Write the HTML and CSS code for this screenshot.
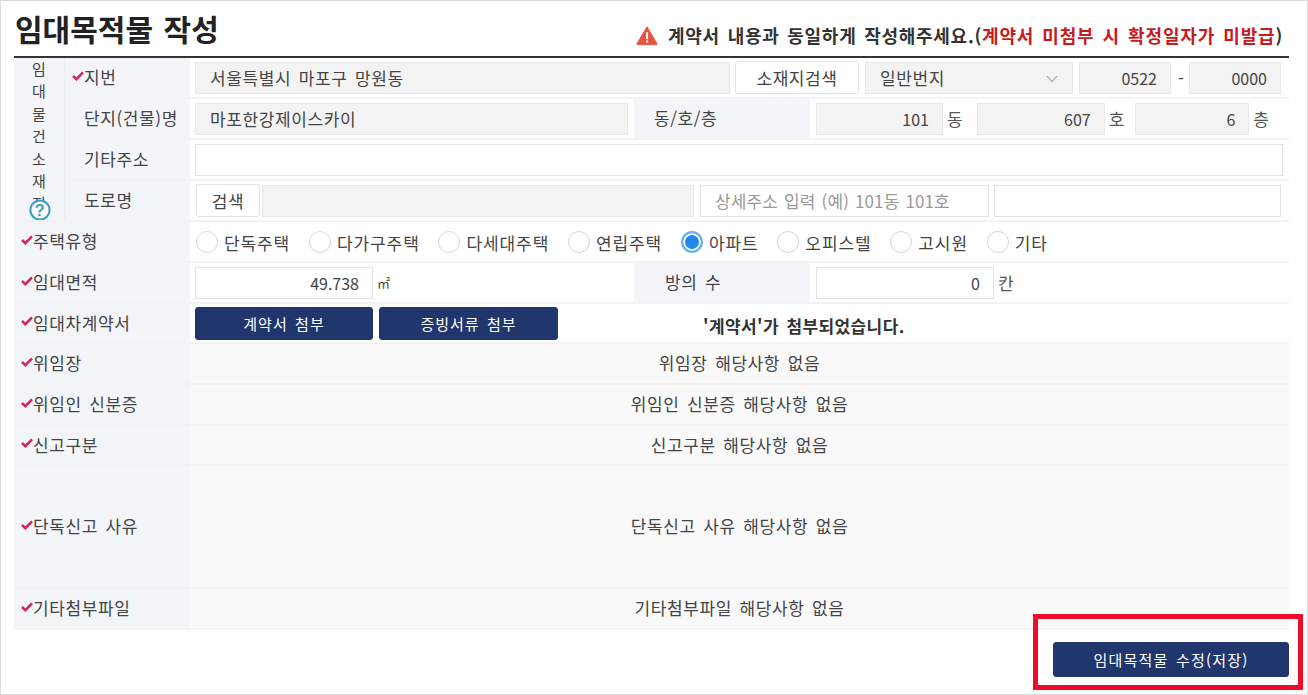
FILE: index.html
```html
<!DOCTYPE html>
<html lang="ko">
<head>
<meta charset="utf-8">
<title>임대목적물 작성</title>
<link rel="stylesheet" href="styles.css">
</head>
<body>
<svg class="defs" width="0" height="0"><defs>
<symbol id="chk" viewBox="0 0 12 10"><path d="M1 5 L4.4 8.2 L11 1.4" fill="none" stroke="#d3265f" stroke-width="2.6"/></symbol>
</defs></svg>
<main class="frame">
  <header class="head">
    <h1 class="title">임대목적물 작성</h1>
    <p class="notice">
      <svg class="warn" viewBox="0 0 24 22"><path d="M12 1.5 L23 20 Q23.4 21 22 21 L2 21 Q.6 21 1 20 Z" fill="#e8553f" stroke="#e8553f" stroke-linejoin="round"/><rect x="11" y="7.5" width="2.2" height="7.5" fill="#fff"/><rect x="11" y="16.5" width="2.2" height="2.2" fill="#fff"/></svg>
      <span>계약서 내용과 동일하게 작성해주세요.(<em class="red">계약서 미첨부 시 확정일자가 미발급</em>)</span>
    </p>
  </header>

  <section class="group">
    <div class="group-label"><span class="stack">임대물건소재지</span>
      <svg class="help" viewBox="0 0 22 22"><circle cx="11" cy="11" r="9.6" fill="#fff" stroke="#3d9cc6" stroke-width="2"/><text x="11" y="16.5" text-anchor="middle" class="help-mark">?</text></svg>
    </div>
    <div class="group-rows">
      <div class="row">
        <div class="label sub"><svg class="check"><use href="#chk"/></svg>지번</div>
        <div class="value">
          <div class="field ro w535">서울특별시 마포구 망원동</div>
          <button class="btn w124">소재지검색</button>
          <div class="field ro select w208">일반번지<svg class="chev" viewBox="0 0 12 8"><path d="M1 1 L6 6.5 L11 1" fill="none" stroke="#bbb" stroke-width="1.6"/></svg></div>
          <div class="field ro num w92">0522</div>
          <span class="dash">-</span>
          <div class="field ro num w92">0000</div>
        </div>
      </div>
      <div class="row">
        <div class="label sub plain">단지(건물)명</div>
        <div class="value">
          <div class="field ro w433">마포한강제이스카이</div>
          <div class="label inner">동/호/층</div>
          <div class="field ro num w127">101</div><span class="unit u34">동</span>
          <div class="field ro num w128">607</div><span class="unit u31">호</span>
          <div class="field ro num w114">6</div><span class="unit">층</span>
        </div>
      </div>
      <div class="row">
        <div class="label sub plain">기타주소</div>
        <div class="value"><div class="field grow"></div></div>
      </div>
      <div class="row">
        <div class="label sub plain">도로명</div>
        <div class="value road">
          <button class="btn w64">검색</button>
          <div class="field ro w432"></div>
          <div class="field ph w289">상세주소 입력 (예) 101동 101호</div>
          <div class="field w287"></div>
        </div>
      </div>
    </div>
  </section>

  <div class="row">
    <div class="label"><svg class="check"><use href="#chk"/></svg>주택유형</div>
    <div class="value radios">
      <label class="radio"><i class="dot"></i>단독주택</label>
      <label class="radio"><i class="dot"></i>다가구주택</label>
      <label class="radio"><i class="dot"></i>다세대주택</label>
      <label class="radio"><i class="dot"></i>연립주택</label>
      <label class="radio"><i class="dot on"></i>아파트</label>
      <label class="radio"><i class="dot"></i>오피스텔</label>
      <label class="radio"><i class="dot"></i>고시원</label>
      <label class="radio"><i class="dot"></i>기타</label>
    </div>
  </div>
  <div class="row">
    <div class="label"><svg class="check"><use href="#chk"/></svg>임대면적</div>
    <div class="value">
      <div class="field num w178">49.738</div><span class="m2">㎡</span>
      <div class="label inner room">방의 수</div>
      <div class="field num w178b">0</div><span class="unit">칸</span>
    </div>
  </div>
  <div class="row short">
    <div class="label"><svg class="check"><use href="#chk"/></svg>임대차계약서</div>
    <div class="value">
      <button class="btn navy w178">계약서 첨부</button>
      <button class="btn navy w179">증빙서류 첨부</button>
      <strong class="attached">'계약서'가 첨부되었습니다.</strong>
    </div>
  </div>
  <div class="row">
    <div class="label"><svg class="check"><use href="#chk"/></svg>위임장</div>
    <div class="value none">위임장 해당사항 없음</div>
  </div>
  <div class="row">
    <div class="label"><svg class="check"><use href="#chk"/></svg>위임인 신분증</div>
    <div class="value none">위임인 신분증 해당사항 없음</div>
  </div>
  <div class="row short">
    <div class="label"><svg class="check"><use href="#chk"/></svg>신고구분</div>
    <div class="value none">신고구분 해당사항 없음</div>
  </div>
  <div class="row tall">
    <div class="label"><svg class="check"><use href="#chk"/></svg>단독신고 사유</div>
    <div class="value none">단독신고 사유 해당사항 없음</div>
  </div>
  <div class="row">
    <div class="label"><svg class="check"><use href="#chk"/></svg>기타첨부파일</div>
    <div class="value none">기타첨부파일 해당사항 없음</div>
  </div>

  <div class="actions"><button class="btn navy save">임대목적물 수정(저장)</button></div>
  <div class="highlight"></div>
</main>
</body>
</html>
```
FILE: styles.css
```css
* { box-sizing: border-box; }
html, body { margin: 0; padding: 0; background: #fff; }
body {
  font-family: "Noto Sans CJK KR", "Noto Sans", sans-serif;
  font-size: 17px;
  letter-spacing: .6px;
  word-spacing: 2.2px;
  color: #444;
  overflow: hidden;
}
.defs { position: absolute; }
.frame {
  position: relative;
  width: 1308px;
  height: 695px;
  border: 1px solid #dcdcdc;
  padding: 0 18px 0 13px;
}
.head {
  height: 57px;
  border-bottom: 2px solid #333;
  display: flex;
  justify-content: space-between;
  align-items: flex-end;
  padding: 0 6px 8px 1px;
}
.title {
  margin: 0;
  font-size: 30px;
  line-height: 40px;
  font-weight: 700;
  color: #222;
  letter-spacing: 0;
}
.notice {
  margin: 0;
  display: flex;
  align-items: center;
  gap: 10px;
  font-size: 18px;
  font-weight: 700;
  letter-spacing: .7px;
  color: #333;
}
.warn { width: 22px; height: 21px; }
.red { color: #c81a20; font-style: normal; letter-spacing: .85px; }

.group { display: flex; }
.group-label {
  position: relative;
  width: 51px;
  flex: none;
  background: #f3f5f9;
  border-bottom: 2px solid #f3f3f3;
  overflow: hidden;
  height: 164px;
  text-align: center;
  border-right: 1px solid #eceef2;
}
.stack {
  display: block;
  width: 20px;
  margin: 0 auto;
  font-size: 15px;
  line-height: 22.4px;
  letter-spacing: 0;
  word-break: break-all;
  color: #444;
}
.help { position: absolute; left: 15px; top: 141px; width: 22px; height: 22px; }
.help-mark { font: 700 16px "Liberation Sans", sans-serif; fill: #3d9cc6; }
.group-rows { flex: 1; min-width: 0; }

.row {
  display: flex;
  height: 41px;
  border-bottom: 2px solid #f3f3f3;
}
.row.short { height: 40px; }
.row.tall { height: 123px; }
.label {
  width: 176px;
  flex: none;
  display: flex;
  align-items: center;
  background: #f3f5f9;
  padding: 0 0 2px 7px;
  white-space: nowrap;
}
.label.sub { width: 125px; padding-left: 7px; }
.label.plain { padding-left: 19px; }
.check { width: 12px; height: 10px; flex: none; margin-bottom: 2px; }
.value {
  flex: 1;
  min-width: 0;
  display: flex;
  align-items: center;
  gap: 6px;
  padding-left: 5px;
}
.field {
  height: 32px;
  display: flex;
  align-items: center;
  padding: 0 14px;
  background: #fff;
  border: 1px solid #e2e2e2;
  flex: none;
  white-space: nowrap;
}
.field.ro { background: #f3f3f3; border-color: #e8e8e8; }
.field.num { justify-content: flex-end; padding-right: 13px; letter-spacing: 0; font-size: 16px; }
.field.ph { color: #999; letter-spacing: .1px; word-spacing: 1.2px; }
.field.grow { flex: 1; margin-right: 6px; }
.select { position: relative; }
.chev { position: absolute; right: 14px; top: 12px; width: 12px; height: 8px; }
.dash { width: 12px; text-align: center; flex: none; margin: 0 -3px; padding-left: 2px; letter-spacing: 0; }
.btn {
  height: 33px;
  border: 1px solid #e2e2e2;
  border-radius: 3px;
  background: #fff;
  font: inherit;
  letter-spacing: inherit;
  word-spacing: inherit;
  color: #444;
  padding: 0;
  flex: none;
}
.navy { background: #21366c; border-color: #21366c; color: #fff; font-size: 15px; letter-spacing: 1px; }
.w535 { width: 535px; } .w124 { width: 124px; margin-left: -1px; } .w208 { width: 208px; } .w92 { width: 92px; }
.w433 { width: 433px; } .w127 { width: 127px; } .w128 { width: 128px; } .w114 { width: 114px; }
.w64 { width: 64px; margin-left: 1px; } .w432 { width: 432px; margin-left: 2px; } .w289 { width: 289px; margin-left: 6px; } .w287 { width: 287px; margin-left: 5px; }
.w178 { width: 178px; } .w179 { width: 179px; } .w178b { width: 178px; }
.road { gap: 0; }
.label.inner {
  width: 176px;
  height: 39px;
  padding-left: 20px;
  margin: 0;
  align-self: flex-start;
}
.row .label.inner.room { margin-left: 229px; width: 176px; padding-left: 31px; }
.unit { flex: none; letter-spacing: 0; color: #555; margin-left: -2px; }
.u34 { margin-right: 8px; }
.u31 { margin-right: 5px; }
.m2 { font-size: 13px; letter-spacing: 0; margin-left: -2px; width: 22px; }
.attached { letter-spacing: .4px; margin-left: 139px; color: #333; font-weight: 700; white-space: nowrap; padding-top: 4px; }
.radios { gap: 0; padding-left: 6px; padding-top: 1px; }
.radio { display: flex; align-items: center; gap: 6px; margin-right: 18.8px; letter-spacing: .9px; white-space: nowrap; }
.dot {
  width: 22px;
  height: 22px;
  border-radius: 50%;
  border: 1px solid #d6d6d6;
  background: #fff;
  flex: none;
}
.dot.on { border: 2px solid #6fb0ec; box-shadow: inset 0 0 0 2px #fff; background: #1e88f0; }
.none { justify-content: center; background: #f9f9fa; padding: 0 0 2px; }
.actions { display: flex; justify-content: flex-end; padding-top: 12px; }
.save { width: 236px; height: 35px; font-size: 15px; letter-spacing: 1.2px; }
.highlight {
  position: absolute;
  left: 1032px;
  top: 613px;
  width: 270px;
  height: 76px;
  border: 5px solid #ee0c2c;
  pointer-events: none;
}
```
